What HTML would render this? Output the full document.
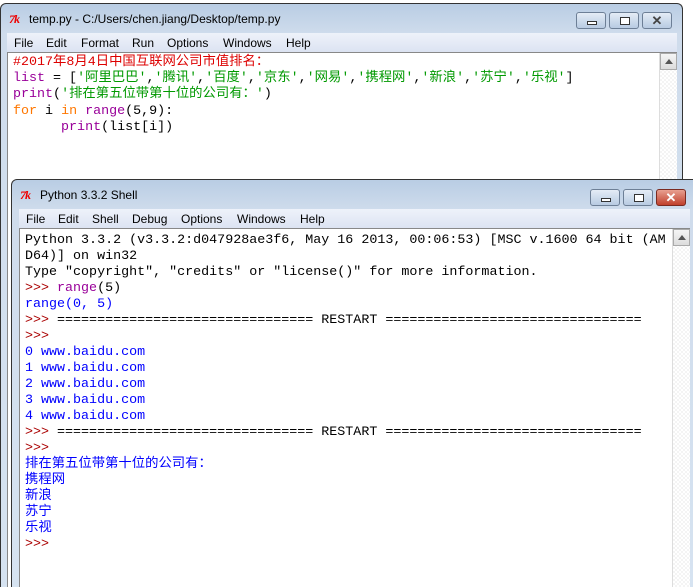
<!DOCTYPE html>
<html><head><meta charset="utf-8"><style>
*{margin:0;padding:0;box-sizing:border-box}
html,body{width:693px;height:587px;overflow:hidden}
body{background:#fff;position:relative;font-family:"Liberation Sans","Noto Sans CJK SC",sans-serif}
.win{position:absolute;border:1px solid #333;border-bottom:none;border-radius:6px 6px 0 0;background:linear-gradient(#b9cde4,#cfdcec 30px,#d6e3f1);overflow:hidden}
.title{position:absolute;left:0;top:0;right:0;height:28px;font-size:12px;color:#000}
.title span{position:absolute;left:28px;top:8px}
.tk{position:absolute;left:8px;top:8px;color:#e00;font-style:italic;font-weight:bold;font-size:12px;font-family:"Liberation Serif",serif;letter-spacing:-1px}
.menu{position:absolute;height:19px;background:linear-gradient(#eef2fa,#dce3f2);font-size:12px;color:#000}
.menu span{position:absolute;top:3px}
.text{position:absolute;background:#fff;border:1px solid #888;border-bottom:none;font-family:"Liberation Mono","Noto Sans CJK SC",monospace;font-size:13.35px;white-space:pre}
.l{position:absolute;left:5px;height:16px;line-height:16px}
.btn{position:absolute;top:8px;width:30px;height:17px;border:1px solid #6d7f96;border-radius:3px;background:linear-gradient(#e4ecf6,#b8cbe2)}
.btn i{position:absolute;border:1.5px solid #333;background:#fff}
.sb{position:absolute;background:repeating-conic-gradient(#f4f4f4 0 25%,#fff 0 50%) 0 0/4px 4px;border-left:1px solid #ddd}
.sb b{position:absolute;left:0;top:0;width:17px;height:17px;border:1px solid #aaa;background:linear-gradient(#f5f5f5,#dcdcdc)}
.sb b:after{content:"";position:absolute;left:4px;top:5px;border:4px solid transparent;border-bottom:5px solid #555;border-top:0}
.r{color:#d00}.g{color:#090}.p{color:#909}.o{color:#f70}.b{color:#00f}.rr{color:#a00}
</style></head><body>
<div class="win" style="left:0;top:3px;width:683px;height:584px">
 <div class="title"><div class="tk">7k</div><span>temp.py - C:/Users/chen.jiang/Desktop/temp.py</span></div>
 <div class="btn" style="left:575px"><i style="left:10px;top:8px;width:10px;height:4px"></i></div>
 <div class="btn" style="left:608px"><i style="left:10px;top:4px;width:10px;height:8px"></i></div>
 <div class="btn" style="left:641px;font-size:13px;text-align:center;line-height:15px;font-weight:bold;color:#444">✕</div>
 <div class="menu" style="left:6px;top:29px;width:670px"><span style="left:7px">File</span><span style="left:39px">Edit</span><span style="left:74px">Format</span><span style="left:125px">Run</span><span style="left:160px">Options</span><span style="left:216px">Windows</span><span style="left:279px">Help</span></div>
 <div class="text" style="left:6px;top:48px;width:670px;height:540px;border-right:none">
  <div class="l r" style="top:2px;">#2017年8月4日中国互联网公司市值排名：</div>
  <div class="l" style="top:18px;"><span class="p">list</span> = [<span class="g">'阿里巴巴'</span>,<span class="g">'腾讯'</span>,<span class="g">'百度'</span>,<span class="g">'京东'</span>,<span class="g">'网易'</span>,<span class="g">'携程网'</span>,<span class="g">'新浪'</span>,<span class="g">'苏宁'</span>,<span class="g">'乐视'</span>]</div>
  <div class="l" style="top:34px;"><span class="p">print</span>(<span class="g">'排在第五位带第十位的公司有：'</span>)</div>
  <div class="l" style="top:51px;"><span class="o">for</span> i <span class="o">in</span> <span class="p">range</span>(5,9):</div>
  <div class="l" style="top:67px;">      <span class="p">print</span>(list[i])</div>
  <div class="sb" style="left:651px;top:0;width:18px;height:540px"><b></b></div>
 </div>
</div>
<div class="win" style="left:11px;top:179px;width:690px;height:408px">
 <div class="title"><div class="tk">7k</div><span>Python 3.3.2 Shell</span></div>
 <div class="btn" style="left:578px;top:9px"><i style="left:10px;top:8px;width:10px;height:4px"></i></div>
 <div class="btn" style="left:611px;top:9px"><i style="left:10px;top:4px;width:10px;height:8px"></i></div>
 <div class="btn" style="left:644px;top:9px;background:linear-gradient(#e8a090,#c0402c);border-color:#7a2a20;font-size:13px;text-align:center;line-height:15px;font-weight:bold;color:#fff">✕</div>
 <div class="menu" style="left:7px;top:29px;width:671px"><span style="left:7px">File</span><span style="left:39px">Edit</span><span style="left:73px">Shell</span><span style="left:113px">Debug</span><span style="left:162px">Options</span><span style="left:218px">Windows</span><span style="left:281px">Help</span></div>
 <div class="text" style="left:7px;top:48px;width:671px;height:370px;border-right:none">
  <div class="l" style="top:4px">Python 3.3.2 (v3.3.2:d047928ae3f6, May 16 2013, 00:06:53) [MSC v.1600 64 bit (AM</div>
  <div class="l" style="top:20px">D64)] on win32</div>
  <div class="l" style="top:36px">Type "copyright", "credits" or "license()" for more information.</div>
  <div class="l" style="top:52px"><span class="rr">&gt;&gt;&gt; </span><span class="p">range</span>(5)</div>
  <div class="l b" style="top:68px">range(0, 5)</div>
  <div class="l" style="top:84px"><span class="rr">&gt;&gt;&gt; </span>================================ RESTART ================================</div>
  <div class="l rr" style="top:100px">&gt;&gt;&gt;</div>
  <div class="l b" style="top:116px">0 www.baidu.com</div>
  <div class="l b" style="top:132px">1 www.baidu.com</div>
  <div class="l b" style="top:148px">2 www.baidu.com</div>
  <div class="l b" style="top:164px">3 www.baidu.com</div>
  <div class="l b" style="top:180px">4 www.baidu.com</div>
  <div class="l" style="top:196px"><span class="rr">&gt;&gt;&gt; </span>================================ RESTART ================================</div>
  <div class="l rr" style="top:212px">&gt;&gt;&gt;</div>
  <div class="l b" style="top:228px">排在第五位带第十位的公司有：</div>
  <div class="l b" style="top:244px">携程网</div>
  <div class="l b" style="top:260px">新浪</div>
  <div class="l b" style="top:276px">苏宁</div>
  <div class="l b" style="top:292px">乐视</div>
  <div class="l rr" style="top:308px">&gt;&gt;&gt;</div>
  <div class="sb" style="left:652px;top:0;width:18px;height:370px"><b></b></div>
 </div>
</div>
</body></html>
